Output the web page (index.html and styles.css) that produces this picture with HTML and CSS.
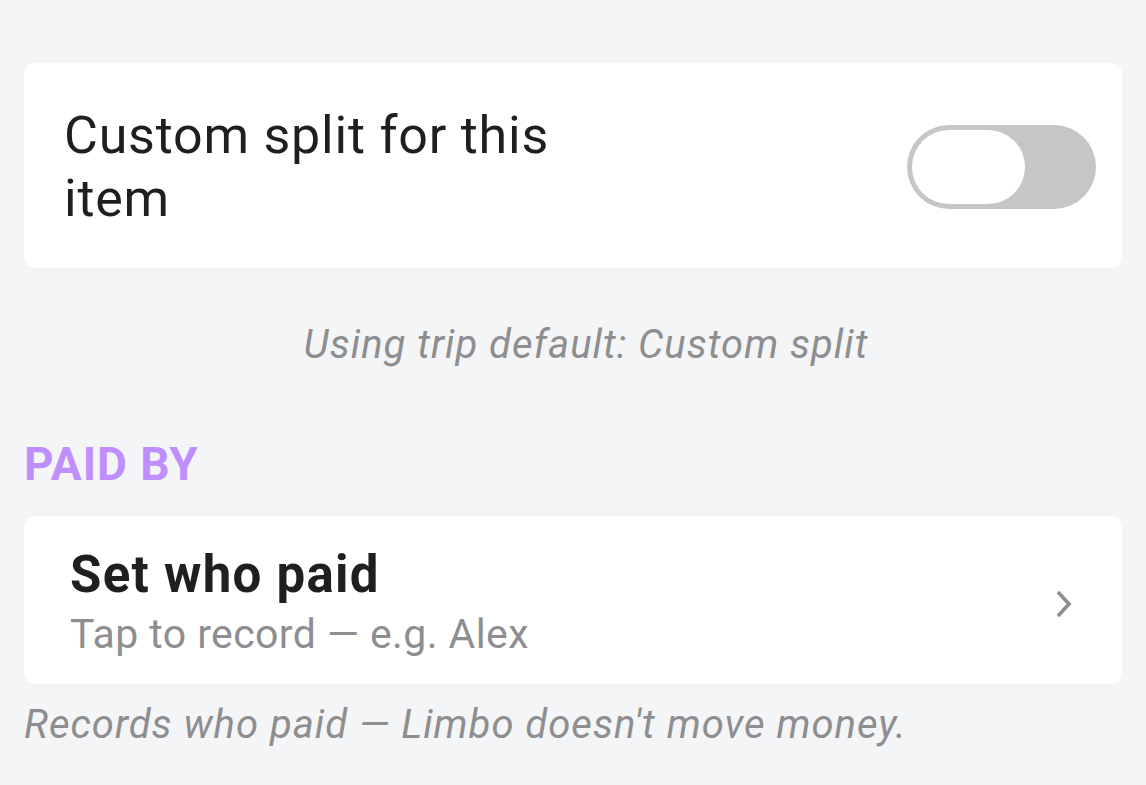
FILE: index.html
```html
<!DOCTYPE html>
<html>
<head>
    <title>Item split</title>
    <link rel="stylesheet" href="styles.css">
</head>
<body>
    <div id="screen">
        <div class="card split-card">
            <span class="split-label">Custom split for this item</span>
            <div class="toggle">
                <div class="toggle-knob"></div>
            </div>
        </div>
        <p class="split-hint">Using trip default: Custom split</p>

        <h2 class="section-title">PAID BY</h2>
        <div class="card payer-card">
            <div class="payer-text">
                <div class="payer-title">Set who paid</div>
                <div class="payer-sub">Tap to record — e.g. Alex</div>
            </div>
            <svg class="chevron" width="16" height="28" viewBox="0 0 16 28">
                <polyline points="2,2 13,14 2,26" fill="none" stroke="#8e8e90" stroke-width="3.6"/>
            </svg>
        </div>
        <p class="footnote">Records who paid — Limbo doesn't move money.</p>
    </div>
</body>
</html>
```

FILE: styles.css
```css
body {
    margin: 0;
    background-color: #f4f5f7;
    font-family: Roboto, "Noto Sans", sans-serif;
    color: #1f1f1f;
}
#screen {
    padding: 63px 24px 0 24px;
    display: flex;
    flex-direction: column;
}
.card {
    background-color: #ffffff;
    border-radius: 11px;
    display: flex;
    align-items: center;
}
.split-card {
    padding: 41px 26px 38px 40px;
    justify-content: space-between;
}
.split-label {
    font-size: 52px;
    line-height: 63px;
    letter-spacing: 0.015em;
    max-width: 560px;
}
.toggle {
    width: 189px;
    height: 84px;
    border-radius: 42px;
    background-color: #c6c6c8;
    padding: 5px;
    box-sizing: border-box;
    display: flex;
    align-items: center;
}
.toggle-knob {
    width: 113px;
    height: 74px;
    border-radius: 37px;
    background-color: #ffffff;
}
.split-hint {
    margin: 55px 0 0 0;
    font-size: 40px;
    line-height: 44px;
    font-style: italic;
    color: #8e8e90;
    text-align: center;
    padding-left: 26px;
    letter-spacing: 0.025em;
}
.section-title {
    margin: 70px 0 0 0;
    font-size: 46px;
    line-height: 54px;
    font-weight: 700;
    letter-spacing: 0.02em;
    color: #c08fff;
}
.payer-card {
    margin-top: 25px;
    padding: 30px 50px 26px 46px;
    justify-content: space-between;
}
.payer-title {
    font-size: 51px;
    line-height: 58px;
    font-weight: 700;
    letter-spacing: 0.025em;
}
.payer-sub {
    margin-top: 6px;
    font-size: 41px;
    line-height: 48px;
    color: #8e8e90;
    letter-spacing: 0.01em;
}
.chevron {
    margin-top: 4px;
}
.footnote {
    margin: 19px 0 0 0;
    font-size: 40px;
    line-height: 44px;
    font-style: italic;
    color: #8e8e90;
    letter-spacing: 0.025em;
}
```
